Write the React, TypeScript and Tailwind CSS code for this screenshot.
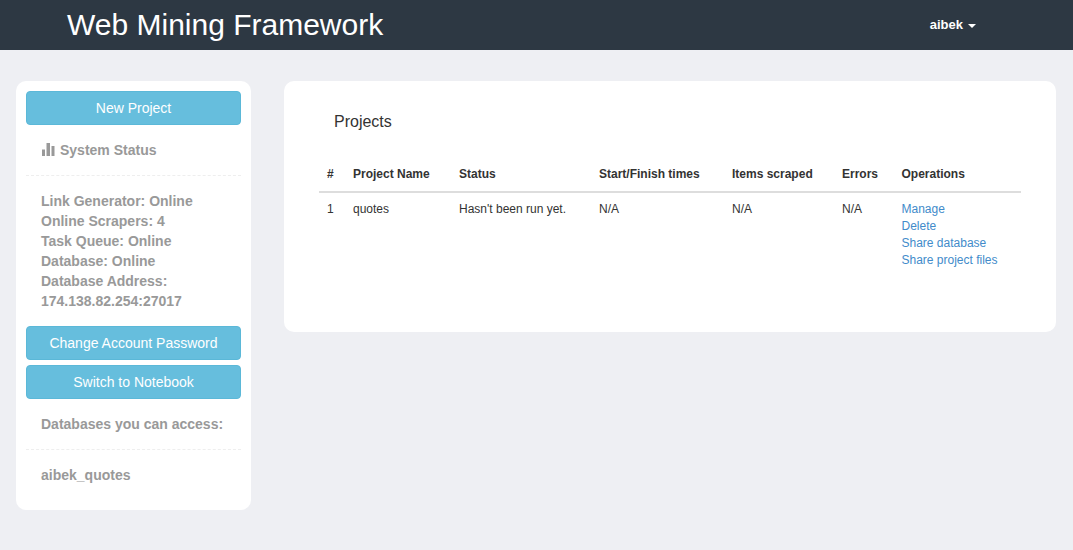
const statusLines = [
  'Link Generator: Online',
  'Online Scrapers: 4',
  'Task Queue: Online',
  'Database: Online',
  'Database Address:',
  '174.138.82.254:27017',
];

const operations = ['Manage', 'Delete', 'Share database', 'Share project files'];

const columns = [
  { label: '#', width: 'w-[26px]' },
  { label: 'Project Name', width: 'w-[106px]' },
  { label: 'Status', width: 'w-[140px]' },
  { label: 'Start/Finish times', width: 'w-[133px]' },
  { label: 'Items scraped', width: 'w-[110px]' },
  { label: 'Errors', width: 'w-[59.5px]' },
  { label: 'Operations', width: 'w-[127.5px]' },
];

function SideButton({ label }: { label: string }) {
  return (
    <button className="block w-full h-[34px] rounded border border-[#5bb8d8] bg-[#66bedd] text-white text-sm font-normal text-center">
      {label}
    </button>
  );
}

// Glyphicon-style stats bars: filled, not stroked like the lucide one
function StatsIcon() {
  return (
    <svg width="14" height="14" viewBox="0 0 14 14" fill="#999999" aria-hidden="true">
      <rect x="1" y="6.5" width="3" height="6.5" />
      <rect x="5.5" y="0" width="3.5" height="13" />
      <rect x="10.5" y="3" width="3" height="10" />
    </svg>
  );
}

export default function App() {
  return (
    <div className="min-h-[550px] bg-[#eeeff3] font-['Liberation_Sans',Arial,sans-serif] text-[#333]">
      <header className="h-[50px] bg-[#2d3843] flex items-center justify-between text-white">
        <h1 className="ml-[67px] text-[30px] leading-[50px]">Web Mining Framework</h1>
        <div className="mr-[97px] flex items-center gap-[5px] text-[13px] font-bold">
          aibek
          <span className="mt-[1px] border-x-[4px] border-t-[4px] border-x-transparent border-t-white" />
        </div>
      </header>

      <div className="flex items-start gap-[33px] pl-4 pr-[17px] pt-[31px]">
        <aside className="w-[235px] h-[429px] shrink-0 rounded-[10px] bg-white p-[10px] text-sm font-bold text-[#999]">
          <SideButton label="New Project" />
          <div className="h-[51px] pb-[1px] flex items-center gap-[5px] pl-[15px] border-b border-dashed border-[#eeeeee]">
            <StatsIcon />
            System Status
          </div>
          <div className="pl-[15px] pt-[15px] leading-5">
            {statusLines.map((line) => (
              <div key={line}>{line}</div>
            ))}
          </div>
          <div className="mt-[15px] flex flex-col gap-[5px]">
            <SideButton label="Change Account Password" />
            <SideButton label="Switch to Notebook" />
          </div>
          <div className="h-[51px] pb-[1px] flex items-center pl-[15px] border-b border-dashed border-[#eeeeee]">
            Databases you can access:
          </div>
          <div className="pl-[15px] pt-[15px] leading-5">aibek_quotes</div>
        </aside>

        <main className="flex-1 h-[251px] rounded-[10px] bg-white px-[35px]">
          <h2 className="pl-[15px] pt-[31px] text-base leading-5">Projects</h2>
          <table className="mt-[26px] w-[702px] table-fixed text-[12px] leading-[17px]">
            <thead>
              <tr className="border-b-2 border-[#dddddd]">
                {columns.map((c) => (
                  <th key={c.label} className={`${c.width} px-2 py-2 text-left font-bold`}>
                    {c.label}
                  </th>
                ))}
              </tr>
            </thead>
            <tbody>
              <tr className="align-top">
                <td className="px-2 py-2">1</td>
                <td className="px-2 py-2">quotes</td>
                <td className="px-2 py-2">Hasn't been run yet.</td>
                <td className="px-2 py-2">N/A</td>
                <td className="px-2 py-2">N/A</td>
                <td className="px-2 py-2">N/A</td>
                <td className="px-2 py-2">
                  {operations.map((op) => (
                    <a key={op} className="block text-[#428bca]">
                      {op}
                    </a>
                  ))}
                </td>
              </tr>
            </tbody>
          </table>
        </main>
      </div>
    </div>
  );
}
